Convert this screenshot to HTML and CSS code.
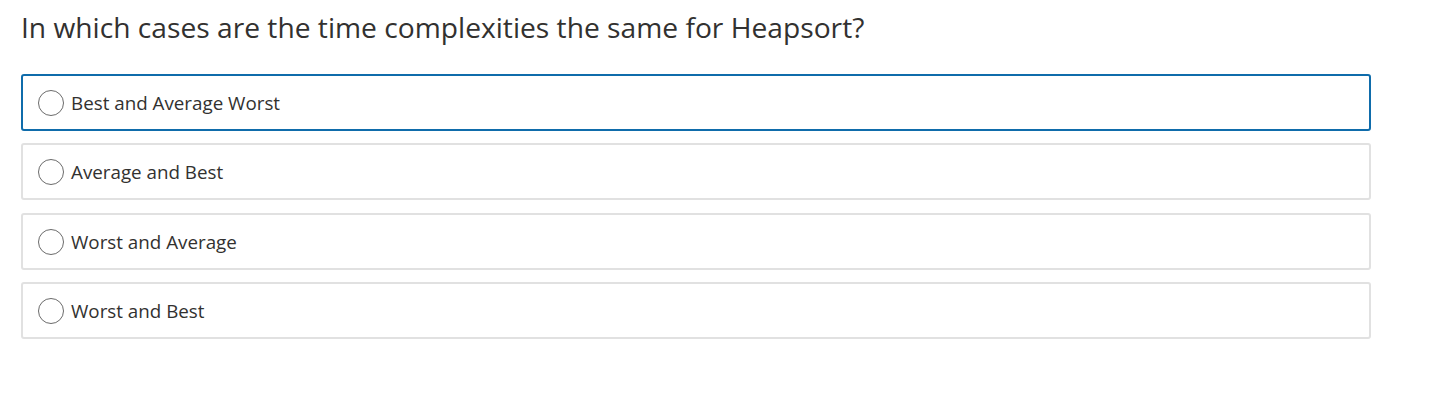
FILE: index.html
```html
<!DOCTYPE html>
<html>
<head>
<meta charset="utf-8">
<link rel="stylesheet" href="styles.css">
</head>
<body>
<div class="page">
  <h1 class="question">In which cases are the time complexities the same for Heapsort?</h1>
  <div class="options">
    <label class="option selected"><span class="radio"></span><span class="text">Best and Average Worst</span></label>
    <label class="option"><span class="radio"></span><span class="text">Average and Best</span></label>
    <label class="option"><span class="radio"></span><span class="text">Worst and Average</span></label>
    <label class="option"><span class="radio"></span><span class="text">Worst and Best</span></label>
  </div>
</div>
</body>
</html>
```
FILE: styles.css
```css
body {
  margin: 0;
  background: #fff;
  font-family: "Open Sans", "Noto Sans", sans-serif;
  color: #323130;
}
.page {
  padding: 8px 0 0 21px;
  width: 1350px;
}
.question {
  margin: 0 0 28px 0;
  font-size: 28.2px;
  font-weight: 400;
  line-height: 38px;
  color: #323130;
}
.options {
  display: flex;
  flex-direction: column;
  gap: 12.33px;
}
.option {
  display: flex;
  align-items: center;
  height: 57px;
  box-sizing: border-box;
  border: 2px solid #e1e1e1;
  border-radius: 3px;
  padding-left: 15px;
  padding-top: 1px;
}
.option.selected {
  border-color: #0f6cab;
}
.radio {
  width: 26px;
  height: 26px;
  box-sizing: border-box;
  border: 1.5px solid #6b6b6b;
  border-radius: 50%;
  margin-right: 7px;
  flex: none;
}
.text {
  font-size: 18.8px;
  color: #323130;
}
```
